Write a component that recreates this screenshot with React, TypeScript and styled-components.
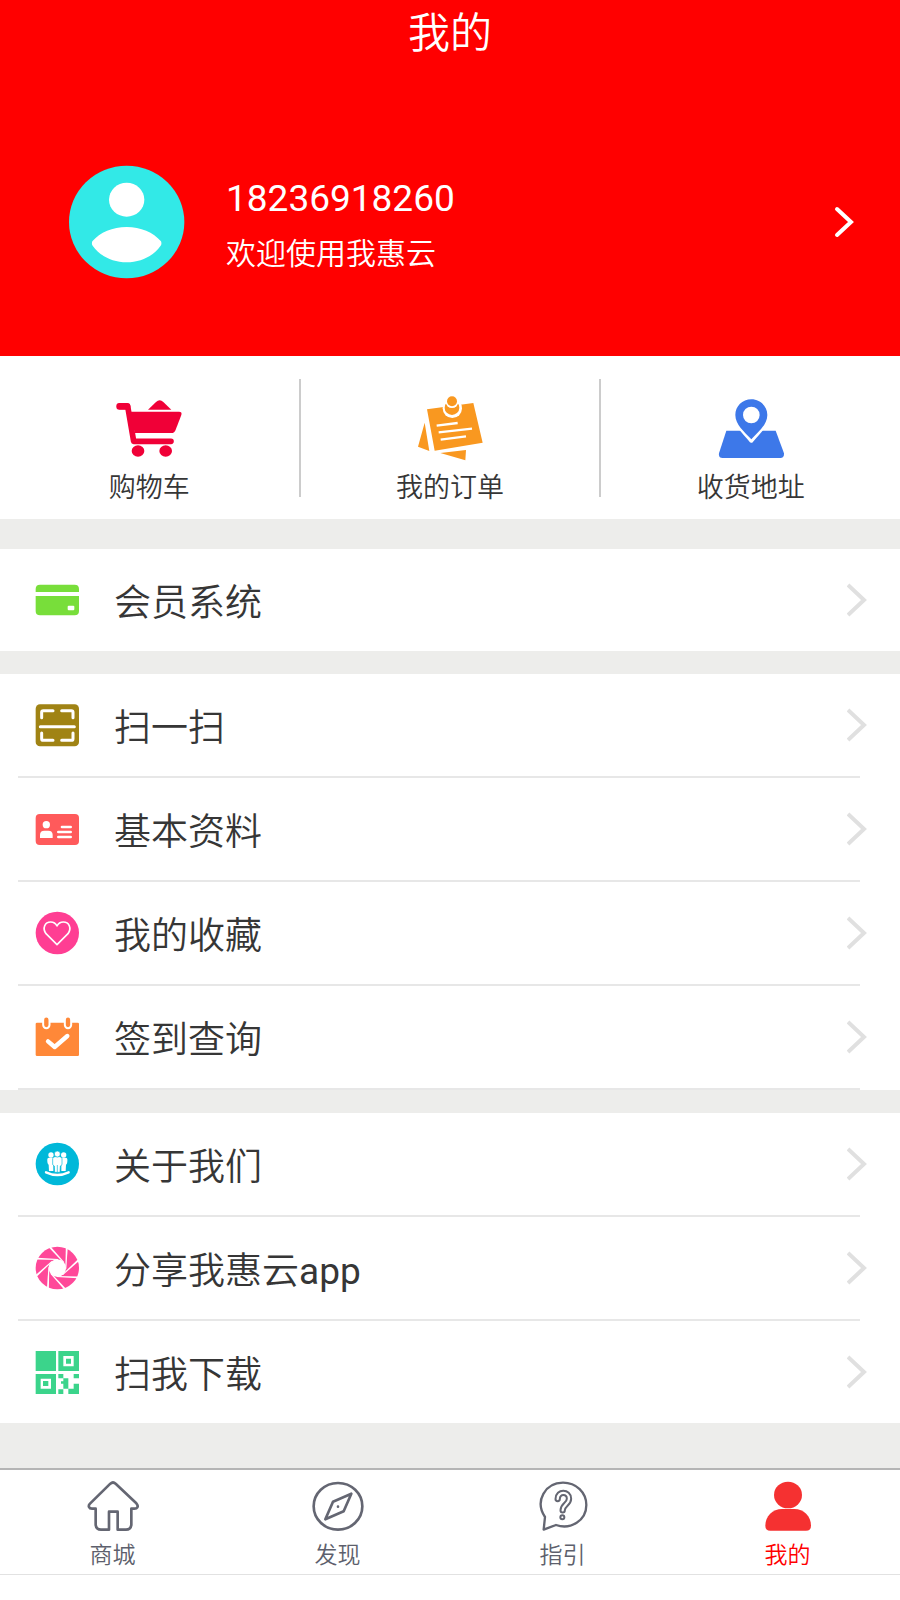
import React from "react";
import styled, { createGlobalStyle } from "styled-components";

const GlobalStyle = createGlobalStyle`
  * { box-sizing: border-box; }
  body {
    margin: 0;
    background: #fff;
    color: #363636;
    font-family: Roboto, "Noto Sans CJK SC", sans-serif;
    font-weight: 350;
  }
  a { color: inherit; text-decoration: none; }
  h1, p, ul { margin: 0; padding: 0; }
  ul { list-style: none; }
  svg { display: block; flex: none; }
`;

const Page = styled.div`
  display: flex;
  flex-direction: column;
  min-height: 100vh;
`;

const Header = styled.header`
  background: #ff0000;
  color: #fff;
  height: 356px;
`;

const Title = styled.h1`
  padding-top: 2px;
  font-size: 42px;
  font-weight: 350;
  line-height: 64px;
  text-align: center;
`;

const Profile = styled.a`
  display: flex;
  align-items: center;
  margin-top: 97px;
  padding: 0 44px 0 68px;
`;

const ProfileText = styled.div`
  flex: 1;
  margin-left: 41px;
  padding-top: 8px;
`;

const Phone = styled.p`
  font-size: 37px;
  font-weight: 400;
  line-height: 56px;
`;

const Welcome = styled.p`
  font-size: 30px;
  line-height: 54px;
`;

const Main = styled.main`
  background: #ededeb;
  padding-bottom: 45px;
`;

const Shortcuts = styled.nav`
  display: flex;
  height: 163px;
  padding: 23px 0 22px;
  margin-bottom: 30px;
  background: #fff;
`;

const Shortcut = styled.a`
  flex: 1;
  display: flex;
  flex-direction: column;
  align-items: center;
  padding-top: 16px;
  border-right: 2px solid #ccc;
  font-size: 27px;
  line-height: 40px;
  &:last-child { border-right: none; }
  svg { margin-bottom: 7px; }
`;

const Group = styled.ul`
  background: #fff;
  & + & { margin-top: 23px; }
`;

const Item = styled.li`
  padding: 0 40px 0 18px;
`;

const ItemLink = styled.a<{ $line: boolean }>`
  display: flex;
  align-items: center;
  height: ${(p) => (p.$line ? 104 : 102)}px;
  padding-left: 17px;
  border-bottom: ${(p) => (p.$line ? "2px solid #e7e7e7" : "none")};
  svg:last-child { margin-right: -7px; }
`;

const ItemLabel = styled.span`
  flex: 1;
  margin-left: 35px;
  padding-top: 8px;
  font-size: 37px;
  line-height: 52px;
`;

const Latin = styled.span`
  font-weight: 400;
`;

const TabBar = styled.nav`
  display: flex;
  border-top: 2px solid #b5b5b5;
  border-bottom: 1px solid #e2e2e2;
  background: #fff;
`;

const Tab = styled.a<{ $active?: boolean }>`
  flex: 1;
  display: flex;
  flex-direction: column;
  align-items: center;
  height: 104px;
  padding-top: 11px;
  color: ${(p) => (p.$active ? "#ff0000" : "#5d5f6c")};
  font-size: 23px;
  line-height: 32px;
  svg { margin-bottom: 9px; }
`;

const ListSvg = ({ children }: { children: React.ReactNode }) => (
  <svg width="44" height="44" viewBox="0 0 132 132" aria-hidden="true">{children}</svg>
);
const ShortcutSvg = ({ children }: { children: React.ReactNode }) => (
  <svg width="68" height="66" viewBox="0 0 204 198" aria-hidden="true">{children}</svg>
);
const TabSvg = ({ children }: { children: React.ReactNode }) => (
  <svg width="52" height="50" viewBox="0 0 156 150" fill="none" stroke="#646672" strokeWidth="8" strokeLinejoin="round" strokeLinecap="round" aria-hidden="true">
    {children}
  </svg>
);

const Avatar = () => (
  <svg width="117" height="114" viewBox="0 0 351 342" aria-hidden="true">
    <ellipse cx="176" cy="171" rx="173" ry="169" fill="#32e9e7" />
    <ellipse cx="176" cy="104" rx="53" ry="51" fill="#fff" />
    <path d="M73 229C96 202 134 186 176 186s80 16 103 43q3 8-1 13c-22 31-60 50-102 50s-80-19-102-50q-4-5-1-13z" fill="#fff" />
  </svg>
);

const HeaderArrow = () => (
  <svg width="22" height="34" viewBox="0 0 22 34" fill="none" stroke="#fff" strokeWidth="4" strokeLinecap="round" aria-hidden="true">
    <path d="M3 4L17 17L3 30" />
  </svg>
);

const Chevron = () => (
  <svg width="20" height="36" viewBox="0 0 20 36" fill="none" stroke="#e0e0e0" strokeWidth="4" aria-hidden="true">
    <path d="M1 3L17 18L1 33" />
  </svg>
);

const CartIcon = () => (
  <ShortcutSvg>
    <g fill="#f00037">
      <path d="M14 34H38L56 139H168" fill="none" stroke="#f00037" strokeWidth="17" strokeLinecap="round" strokeLinejoin="round" />
      <rect x="4" y="24" width="42" height="20" rx="9" />
      <path d="M40 50H192q10 0 7 10l-17 44q-4 10-12 10H60z" />
      <path d="M99 44l24-23q11-10 22 0l24 23z" />
      <ellipse cx="69" cy="168" rx="19" ry="17" />
      <ellipse cx="152" cy="168" rx="19" ry="17" />
    </g>
  </ShortcutSvg>
);

const OrderIcon = () => (
  <ShortcutSvg>
    <g fill="#f99820">
      <path d="M26 83L6 155L40 168zM73 174L150 165L148 196zM33 43L172 24L200 143L56 167z" />
      <path d="M62 92L125 84M68 112L168 101M74 134L150 124" stroke="#fff" strokeWidth="7" />
      <circle cx="109" cy="40" r="29" fill="#fff" />
      <circle cx="108" cy="38" r="22" />
      <circle cx="108" cy="20" r="19" fill="#fff" />
      <circle cx="108" cy="19" r="15" />
    </g>
  </ShortcutSvg>
);

const AddressIcon = () => (
  <ShortcutSvg>
    <g fill="#3d78e9">
      <path d="M28 107H176L201 175q1 14-11 14H17q-13 0-11-14z" />
      <path d="M103 13c27 0 48 21 48 47 0 32-27 50-48 77-21-27-48-45-48-77 0-26 21-47 48-47z" fill="none" stroke="#fff" strokeWidth="12" strokeLinejoin="round" />
      <path d="M103 13c27 0 48 21 48 47 0 29-27 50-48 73-21-23-48-44-48-73 0-26 21-47 48-47z" />
      <circle cx="103" cy="60" r="25" fill="#fff" />
    </g>
  </ShortcutSvg>
);

const CardIcon = () => (
  <ListSvg>
    <path fill="#78de3a" d="M2 42V33q0-13 13-13H119q13 0 13 13v9zM2 54H132V99q0 13-13 13H15Q2 112 2 99z" />
    <rect x="98" y="83" width="20" height="14" rx="3" fill="#fff" />
  </ListSvg>
);

const ScanIcon = () => (
  <ListSvg>
    <rect x="2" y="4" width="130" height="126" rx="13" fill="#a08314" />
    <path d="M20 44V28q0-5 5-5H54M80 23h29q5 0 5 5V44M20 90v17q0 5 5 5H54M80 112h29q5 0 5-5V90M16 71H118" fill="none" stroke="#fff" strokeWidth="9" strokeLinecap="round" />
  </ListSvg>
);

const IdIcon = () => (
  <ListSvg>
    <rect x="2" y="21" width="130" height="93" rx="12" fill="#ff5a5b" />
    <circle cx="34" cy="53" r="11" fill="#fff" />
    <path d="M15 93V84q0-13 13-13H40q13 0 13 13v9z" fill="#fff" />
    <path d="M81 60h26M70 75h37M70 90h37" stroke="#fff" strokeWidth="8" strokeLinecap="round" />
  </ListSvg>
);

const HeartIcon = () => (
  <ListSvg>
    <ellipse cx="67" cy="66" rx="65" ry="64" fill="#ff3e93" />
    <path d="M66 101L33 68C21 51 30 33 47 33q13 0 19 12 6-12 19-12c17 0 26 18 14 35z" fill="none" stroke="#fff" strokeWidth="5" strokeLinejoin="round" />
  </ListSvg>
);

const CalendarIcon = () => (
  <ListSvg>
    <rect x="2" y="23" width="130" height="100" rx="4" fill="#ff8838" />
    <path d="M34 14V30M99 14V30" stroke="#fff" strokeWidth="25" strokeLinecap="round" />
    <path d="M34 14V30M99 14V30" stroke="#ff8838" strokeWidth="13" strokeLinecap="round" />
    <path d="M39 79L59 96L97 63" fill="none" stroke="#fff" strokeWidth="13" strokeLinecap="round" strokeLinejoin="round" />
  </ListSvg>
);

const PeopleIcon = () => (
  <ListSvg>
    <ellipse cx="67" cy="66" rx="65" ry="64" fill="#00b8d9" />
    <g fill="#fff">
      <circle cx="48" cy="39" r="8" />
      <circle cx="86" cy="39" r="8" />
      <path d="M37 51q1-4 6-4h12v40h-13l-1-19q-5-3-4-17zM97 51q-1-4-6-4H79v40h13l1-19q5-3 4-17z" />
      <g stroke="#00b8d9" strokeWidth="2">
        <path d="M53 50q1-6 7-6H74q6 0 7 6v18l-5 4-1 19H59l-1-19-5-4z" />
        <circle cx="67" cy="36" r="9" />
      </g>
      <path d="M67 69V90" stroke="#00b8d9" strokeWidth="2" />
    </g>
    <path d="M33 91Q67 107 101 91" fill="none" stroke="#fff" strokeWidth="7" strokeLinecap="round" />
  </ListSvg>
);

const ApertureIcon = () => (
  <ListSvg>
    <ellipse cx="67" cy="66" rx="65" ry="64" fill="#ff4899" />
    <circle cx="67" cy="66" r="26" fill="#fff" />
    {[0, 45, 90, 135, 180, 225, 270, 315].map((angle) => (
      <path key={angle} d="M41 4L46 1L88 49L85 50z" fill="#fff" transform={`rotate(${angle} 67 66)`} />
    ))}
  </ListSvg>
);

const QrIcon = () => (
  <ListSvg>
    <path
      fill="#3bd48b"
      fillRule="evenodd"
      d="M2 3H63V63H2zM70 3H132V63H70zM85 18V49H116V18zM93 26H108V41H93zM2 72H63V132H2zM17 86V116H48V86zM24 93H40V108H24zM70 72H85V85H100V116H85V101H78V94H85V85H70zM116 72H132V85H116zM116 101H132V132H100V116H116zM70 118H85V132H70z"
    />
  </ListSvg>
);

const HomeIcon = () => (
  <TabSvg>
    <path d="M70 8q8-7 16 0L148 67q6 7 3 12-2 4-9 4h-9v49q-2 14-16 14H92V92H66V146H42q-14 0-16-14V83H15q-7 0-9-5-2-5 3-10z" />
  </TabSvg>
);

const CompassIcon = () => (
  <TabSvg>
    <ellipse cx="78" cy="76" rx="73" ry="70" />
    <path d="M118 38L63 62L40 115L95 91z" />
    <circle cx="78" cy="77" r="2" strokeWidth="4" />
  </TabSvg>
);

const GuideIcon = () => (
  <TabSvg>
    <path strokeWidth="7" d="M24 108C-8 60 25 5 78 5c40 0 70 30 70 67 0 47-47 75-91 60L20 146z" />
    <path d="M62 54C62 29 96 31 96 53 96 70 77 70 77 88" strokeWidth="19" />
    <path d="M62 54C62 29 96 31 96 53 96 70 77 70 77 88" stroke="#fff" strokeWidth="7" />
    <circle cx="76" cy="109" r="6" strokeWidth="6" />
  </TabSvg>
);

const MineIcon = () => (
  <TabSvg>
    <g fill="#f53131" stroke="none">
      <ellipse cx="78" cy="42" rx="42" ry="40" />
      <path d="M60 84H97c28 0 50 22 50 50q0 15-15 15H25q-15 0-15-15c0-28 22-50 50-50z" />
    </g>
  </TabSvg>
);

const shortcuts = [
  { label: "购物车", Icon: CartIcon },
  { label: "我的订单", Icon: OrderIcon },
  { label: "收货地址", Icon: AddressIcon },
];

type MenuItem = { label: string; latin?: string; Icon: () => React.JSX.Element; line: boolean };

const groups: MenuItem[][] = [
  [{ label: "会员系统", Icon: CardIcon, line: false }],
  [
    { label: "扫一扫", Icon: ScanIcon, line: true },
    { label: "基本资料", Icon: IdIcon, line: true },
    { label: "我的收藏", Icon: HeartIcon, line: true },
    { label: "签到查询", Icon: CalendarIcon, line: true },
  ],
  [
    { label: "关于我们", Icon: PeopleIcon, line: true },
    { label: "分享我惠云", latin: "app", Icon: ApertureIcon, line: true },
    { label: "扫我下载", Icon: QrIcon, line: false },
  ],
];

const tabs = [
  { label: "商城", Icon: HomeIcon },
  { label: "发现", Icon: CompassIcon },
  { label: "指引", Icon: GuideIcon },
  { label: "我的", Icon: MineIcon, active: true },
];

export default function App() {
  return (
    <Page>
      <GlobalStyle />
      <Header>
        <Title>我的</Title>
        <Profile href="#profile">
          <Avatar />
          <ProfileText>
            <Phone>18236918260</Phone>
            <Welcome>欢迎使用我惠云</Welcome>
          </ProfileText>
          <HeaderArrow />
        </Profile>
      </Header>
      <Main>
        <Shortcuts>
          {shortcuts.map(({ label, Icon }) => (
            <Shortcut key={label} href={`#${label}`}>
              <Icon />
              {label}
            </Shortcut>
          ))}
        </Shortcuts>
        {groups.map((items) => (
          <Group key={items[0].label}>
            {items.map(({ label, latin, Icon, line }) => (
              <Item key={label}>
                <ItemLink href={`#${label}`} $line={line}>
                  <Icon />
                  <ItemLabel>
                    {label}
                    {latin && <Latin>{latin}</Latin>}
                  </ItemLabel>
                  <Chevron />
                </ItemLink>
              </Item>
            ))}
          </Group>
        ))}
      </Main>
      <TabBar>
        {tabs.map(({ label, Icon, active }) => (
          <Tab key={label} href={`#${label}`} $active={active} aria-current={active ? "page" : undefined}>
            <Icon />
            {label}
          </Tab>
        ))}
      </TabBar>
    </Page>
  );
}
